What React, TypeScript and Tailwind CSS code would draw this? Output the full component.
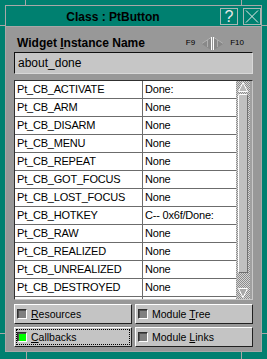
import React from "react"

const callbacks = [
  ["Pt_CB_ACTIVATE", "Done:"],
  ["Pt_CB_ARM", "None"],
  ["Pt_CB_DISARM", "None"],
  ["Pt_CB_MENU", "None"],
  ["Pt_CB_REPEAT", "None"],
  ["Pt_CB_GOT_FOCUS", "None"],
  ["Pt_CB_LOST_FOCUS", "None"],
  ["Pt_CB_HOTKEY", "C-- 0x6f/Done:"],
  ["Pt_CB_RAW", "None"],
  ["Pt_CB_REALIZED", "None"],
  ["Pt_CB_UNREALIZED", "None"],
  ["Pt_CB_DESTROYED", "None"],
]

function Indicator({ on }: { on?: boolean }) {
  return (
    <div className="w-[10px] h-[10px] shrink-0 border-t border-l border-[#303030] border-b border-r border-b-white border-r-white">
      <div
        className={`w-full h-full border-t border-l border-[#505050] ${
          on ? "bg-[#00ff00]" : "bg-[#808080]"
        }`}
      />
    </div>
  )
}

function ToggleButton({
  children,
  on,
  focused,
}: {
  children: React.ReactNode
  on?: boolean
  focused?: boolean
}) {
  return (
    <div className="h-[20px] bg-[#c4c4c4] border-t border-l border-white border-b border-r border-b-[#202020] border-r-[#202020] p-[1px] flex">
      <div
        className={`flex-1 flex items-center gap-[4px] pl-[1px] ${
          focused ? "outline outline-1 outline-dotted outline-black -outline-offset-1" : ""
        }`}
      >
        <Indicator on={on} />
        <span className="text-[10.5px] leading-[13px] text-black whitespace-nowrap">{children}</span>
      </div>
    </div>
  )
}

function FrameMarks() {
  // resize handle segments on the teal frame
  return (
    <>
      <div className="absolute left-[25px] top-0 w-px h-[5px] bg-[#a8a8a8]" />
      <div className="absolute left-[241px] top-0 w-px h-[5px] bg-[#a8a8a8]" />
      <div className="absolute left-0 top-[25px] w-[5px] h-px bg-[#a8a8a8]" />
      <div className="absolute right-0 top-[25px] w-[5px] h-px bg-[#a8a8a8]" />
      <div className="absolute left-[26px] bottom-0 w-px h-[7px] bg-[#a8a8a8]" />
      <div className="absolute left-[241px] bottom-0 w-px h-[7px] bg-[#a8a8a8]" />
      <div className="absolute left-0 top-[333px] w-[5px] h-px bg-[#a8a8a8]" />
      <div className="absolute right-0 top-[333px] w-[5px] h-px bg-[#a8a8a8]" />
    </>
  )
}

export default function App() {
  return (
    <div className="relative w-[267px] h-[359px] bg-[#008070] overflow-hidden font-['Liberation_Sans',Arial,sans-serif] select-none">
      <FrameMarks />

      <div className="mt-[5px] mx-[5px] h-[347px] border border-[#a8a8a8] flex flex-col">
        {/* Title bar */}
        <div className="h-[21px] shrink-0 flex items-center border-b border-[#a8a8a8]">
          <div className="flex-1 text-center text-[12px] font-bold text-black leading-none pt-[1px]">
            Class : PtButton
          </div>
          <div className="w-[18px] h-[17px] border border-[#a8b8b4] flex items-center justify-center text-[16px] leading-none text-[#e8e8e8] mt-[1px]">
            ?
          </div>
          <div className="w-[18px] h-[17px] ml-[5px] border border-[#a8b8b4] flex items-center justify-center mt-[1px]">
            <svg width="14" height="13" viewBox="0 0 14 13">
              <path d="M1 0.5 L13 12.5 M13 0.5 L1 12.5" stroke="#e8e8e8" strokeWidth="1" fill="none" />
            </svg>
          </div>
        </div>

        {/* Content */}
        <div className="flex-1 bg-[#989898] px-[8px] pt-[9px] pb-[3px] flex flex-col">
          <div className="h-[14px] flex items-center pl-[3px] pr-[9px]">
            <span className="flex-1 text-[12px] font-bold text-black leading-none">
              Widget <u>I</u>nstance Name
            </span>
            <span className="text-[8px] leading-none text-black">F9</span>
            <svg className="mx-[6px]" width="23" height="13" viewBox="0 0 23 13">
              <polygon points="10,0 10,13 0,6.5" fill="#888888" />
              <polyline points="10,0.5 0.8,6.5" stroke="#b4b4b4" fill="none" />
              <line x1="6.5" y1="3" x2="6.5" y2="10" stroke="#b0b0b0" />
              <line x1="10.5" y1="0" x2="10.5" y2="13" stroke="#ffffff" />
              <polygon points="13,0 13,13 23,6.5" fill="#888888" />
              <polyline points="13,0.5 22.2,6.5" stroke="#b4b4b4" fill="none" />
              <line x1="12.5" y1="0" x2="12.5" y2="13" stroke="#ffffff" />
              <line x1="16.5" y1="3" x2="16.5" y2="10" stroke="#b0b0b0" />
            </svg>
            <span className="text-[8px] leading-none text-black">F10</span>
          </div>

          <div className="mt-[2px] h-[22px] bg-[#c6c6c6] border-t border-l border-[#101010] border-b border-r border-b-[#d8d8d8] border-r-[#d8d8d8] flex items-center pl-[3px]">
            <span className="text-[12px] leading-none text-black">about_done</span>
          </div>

          {/* Callback table */}
          <div className="mt-[6px] h-[220px] flex border-t border-l border-[#303030] border-b border-r border-b-[#c8c8c8] border-r-[#c8c8c8]">
            <div className="w-[221px] bg-white overflow-hidden">
              {callbacks.map(([name, value]) => (
                <div key={name} className="h-[18px] flex border-b border-[#6c6c6c]">
                  <div className="w-[128px] shrink-0 border-r border-[#6c6c6c] flex items-center pl-[2px] text-[11px] tracking-[-0.2px] text-black leading-none">
                    {name}
                  </div>
                  <div className="flex-1 flex items-center pl-[2px] text-[11px] tracking-[-0.2px] text-black leading-none whitespace-nowrap">
                    {value}
                  </div>
                </div>
              ))}
              {/* next row, scrolled out of view */}
              <div className="h-[18px] flex">
                <div className="w-[128px] shrink-0 border-r border-[#6c6c6c]" />
              </div>
            </div>
            <div className="w-[14px] bg-[repeating-conic-gradient(#8c8c8c_0_25%,#d4d4d4_0_50%)] bg-[length:2px_2px] flex flex-col items-center pt-[1px] pb-[1px]">
              <svg width="10" height="10" viewBox="0 0 10 10">
                <polygon points="5,0.5 9.5,9.5 0.5,9.5" fill="#b8b8b8" stroke="#ffffff" strokeWidth="1" />
              </svg>
              <div className="mt-[2px] w-[10px] h-[179px] bg-[#c0c0c0] border-l border-t border-white border-r border-b border-r-[#707070] border-b-[#707070] rounded-t-[2px]" />
              <div className="flex-1" />
              <svg width="10" height="10" viewBox="0 0 10 10">
                <polygon points="0.5,0.5 9.5,0.5 5,9.5" fill="#a8a8a8" stroke="#ffffff" strokeWidth="1" />
              </svg>
            </div>
            <div className="flex-1 bg-[#a0a0a0]" />
          </div>

          {/* Toggle buttons */}
          <div className="mt-[4px] grid grid-cols-2 gap-x-[3px] gap-y-[3px]">
            <ToggleButton>
              <u>R</u>esources
            </ToggleButton>
            <ToggleButton>
              Module <u>T</u>ree
            </ToggleButton>
            <ToggleButton on focused>
              <u>C</u>allbacks
            </ToggleButton>
            <ToggleButton>
              Module <u>L</u>inks
            </ToggleButton>
          </div>
        </div>
      </div>
    </div>
  )
}
